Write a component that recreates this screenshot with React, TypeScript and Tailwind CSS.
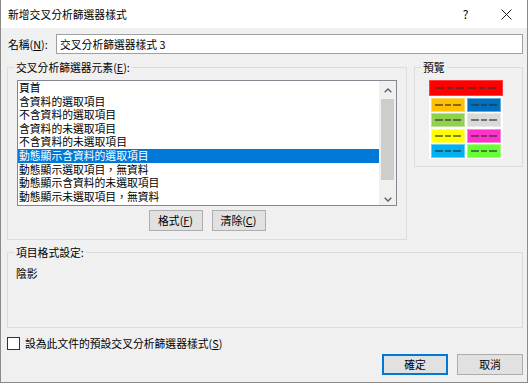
import React from 'react';

const items = [
  '頁首',
  '含資料的選取項目',
  '不含資料的選取項目',
  '含資料的未選取項目',
  '不含資料的未選取項目',
  '動態顯示含資料的選取項目',
  '動態顯示選取項目，無資料',
  '動態顯示含資料的未選取項目',
  '動態顯示未選取項目，無資料',
];

const cells = [
  ['bg-[#ffc000]', 'bg-[#0070c0]'],
  ['bg-[#92d050]', 'bg-[#d9d9d9]'],
  ['bg-[#ffff00]', 'bg-[#ff33cc]'],
  ['bg-[#00b0f0]', 'bg-[#66ff33]'],
];

// tiny "text" marks used in the preview swatch
function Squig({ w }: { w: number }) {
  return (
    <svg width={w} height="4" viewBox={`0 0 ${w} 4`} className="shrink-0">
      <path d={`M0 2 H${w}`} stroke="#333" strokeWidth="0.6" />
      <path
        d={Array.from({ length: w + 1 }, (_, i) => `${i === 0 ? 'M' : 'L'}${i} ${i % 2 ? 1 : 3}`).join(' ')}
        stroke="#333"
        strokeWidth="0.5"
        fill="none"
      />
    </svg>
  );
}

function Btn({ children, primary }: { children: React.ReactNode; primary?: boolean }) {
  return (
    <div
      className={`h-[21px] flex items-center justify-center bg-[#e1e1e1] leading-none ${
        primary ? 'w-[66px] border-2 border-[#0078d7]' : 'border border-[#adadad]'
      }`}
    >
      {children}
    </div>
  );
}

export default function App() {
  return (
    <div className="w-[529px] h-[384px] bg-white text-black text-[10.8px] font-['Noto_Sans_CJK_TC','Noto_Sans',sans-serif]">
      <div className="w-[528px] h-[383px] flex flex-col border-x border-b border-[#8a8a8a] bg-[#f0f0f0]">
        {/* title bar */}
        <div className="h-[28px] shrink-0 bg-white flex items-center pl-[7px]">
          <div className="flex-1">新增交叉分析篩選器樣式</div>
          <div className="w-[41px] flex justify-center text-[12px]">?</div>
          <div className="w-[41px] flex justify-center">
            <svg width="11" height="11" viewBox="0 0 11 11">
              <path d="M0.5 0.5 L10.5 10.5 M10.5 0.5 L0.5 10.5" stroke="#222" strokeWidth="1" />
            </svg>
          </div>
        </div>

        <div className="flex flex-col pl-[6px] pr-[4px]">
          {/* name row */}
          <div className="mt-[6px] h-[20px] flex items-center">
            <div className="w-[49px] pl-[1px]">
              名稱(<span className="underline">N</span>):
            </div>
            <div className="flex-1 h-[20px] flex items-center bg-white border border-[#a0a0a0] pl-[3px]">
              交叉分析篩選器樣式 3
            </div>
          </div>

          {/* elements + preview */}
          <div className="mt-[13px] flex gap-[7px] items-start">
            <div className="relative w-[400px] h-[173px] border border-[#dcdcdc] pl-[9px] pt-[12px]">
              <span className="absolute left-[6px] top-[-8px] px-[2px] leading-[14px] bg-[#f0f0f0]">
                交叉分析篩選器元素(<span className="underline">E</span>):
              </span>
              <div className="w-[380px] h-[126px] flex border border-[#828790] bg-white">
                <div className="flex-1 flex flex-col">
                  {items.map((it, i) => (
                    <div
                      key={it}
                      className={`h-[13.6px] leading-[13.6px] pl-[1px] whitespace-nowrap ${
                        i === 5 ? 'bg-[#0078d7] text-white' : ''
                      }`}
                    >
                      {it}
                    </div>
                  ))}
                </div>
                <div className="w-[17px] flex flex-col items-center bg-[#f0f0f0]">
                  <div className="h-[18px] flex items-center justify-center">
                    <svg width="8" height="5" viewBox="0 0 8 5">
                      <path d="M0.7 4.3 L4 1 L7.3 4.3" stroke="#606060" strokeWidth="1.4" fill="none" />
                    </svg>
                  </div>
                  <div className="w-[13px] h-[81px] bg-[#cdcdcd]" />
                  <div className="flex-1 flex items-end pb-[3px]">
                    <svg width="8" height="5" viewBox="0 0 8 5">
                      <path d="M0.7 0.7 L4 4 L7.3 0.7" stroke="#606060" strokeWidth="1.4" fill="none" />
                    </svg>
                  </div>
                </div>
              </div>
              <div className="w-[380px] mt-[4px] flex justify-center gap-[9px]">
                <div className="w-[54px]">
                  <Btn>
                    格式(<span className="underline">F</span>)
                  </Btn>
                </div>
                <div className="w-[54px]">
                  <Btn>
                    清除(<span className="underline">C</span>)
                  </Btn>
                </div>
              </div>
            </div>

            <div className="relative w-[109px] h-[100px] border border-[#dcdcdc] pl-[14px] pt-[12px]">
              <span className="absolute left-[6px] top-[-8px] px-[2px] leading-[14px] bg-[#f0f0f0]">預覽</span>
              <div className="w-[74px] flex flex-col bg-white">
                <div className="h-[16px] bg-[#ff0000] border border-[#ff4040] flex items-center justify-around px-[4px]">
                  <Squig w={8} />
                  <Squig w={6} />
                  <Squig w={8} />
                  <Squig w={8} />
                  <Squig w={6} />
                  <Squig w={8} />
                </div>
                <div className="grid grid-cols-2 gap-x-[2px] gap-y-[1.4px] px-[2px] pt-[2px] pb-[1px]">
                  {cells.flat().map((c, i) => (
                    <div
                      key={i}
                      className={`h-[14px] ${c} border border-white/40 flex items-center justify-between px-[3px]`}
                    >
                      <Squig w={8} />
                      <Squig w={6} />
                      <Squig w={8} />
                    </div>
                  ))}
                </div>
              </div>
            </div>
          </div>

          {/* item format */}
          <div className="relative mt-[12px] h-[76px] border border-[#dcdcdc] pl-[8px] pt-[13px]">
            <span className="absolute left-[6px] top-[-8px] px-[2px] leading-[14px] bg-[#f0f0f0]">項目格式設定:</span>
            <div className="leading-[14px]">陰影</div>
          </div>

          {/* checkbox */}
          <div className="mt-[9px] h-[13px] flex items-center gap-[5px]">
            <div className="w-[13px] h-[13px] border border-[#333] bg-white" />
            <div className="leading-[13px]">
              設為此文件的預設交叉分析篩選器樣式(<span className="underline">S</span>)
            </div>
          </div>

          {/* buttons */}
          <div className="mt-[4px] flex justify-end gap-[9px]">
            <Btn primary>確定</Btn>
            <div className="w-[66px]">
              <Btn>取消</Btn>
            </div>
          </div>
        </div>
      </div>
    </div>
  );
}
